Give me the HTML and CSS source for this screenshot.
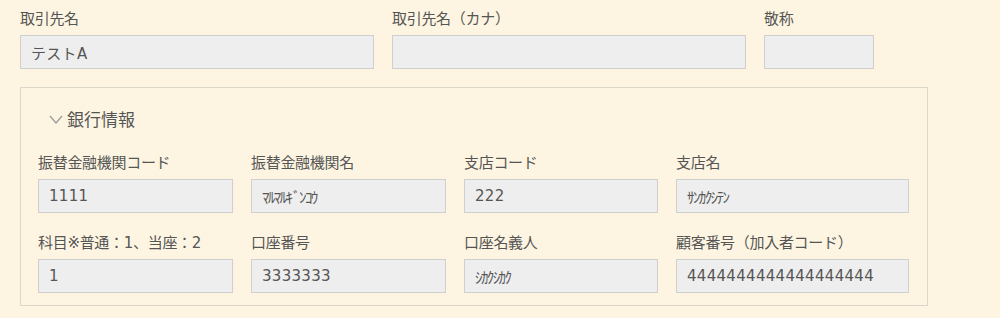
FILE: index.html
```html
<!DOCTYPE html>
<html lang="ja">
<head>
    <meta charset="UTF-8">
    <meta name="viewport" content="width=device-width, initial-scale=1.0">
    <title>取引先情報</title>
    <link rel="stylesheet" href="styles.css">
</head>
<body>
    <div class="page">
        <div class="field-row">
            <div class="field w-name">
                <label class="field-label">取引先名</label>
                <input class="field-input" type="text" value="テストA" readonly>
            </div>
            <div class="field w-name">
                <label class="field-label">取引先名（カナ）</label>
                <input class="field-input" type="text" value="" readonly>
            </div>
            <div class="field w-title">
                <label class="field-label">敬称</label>
                <input class="field-input" type="text" value="" readonly>
            </div>
        </div>

        <fieldset class="bank-box">
            <div class="bank-head">
                <svg class="chevron" width="14" height="9" viewBox="0 0 14 9">
                    <polyline points="1,1 7,8 13,1" fill="none" stroke="#999" stroke-width="1.2"/>
                </svg>
                <span>銀行情報</span>
            </div>
            <div class="bank-grid">
                <div class="field">
                    <label class="field-label">振替金融機関コード</label>
                    <input class="field-input" type="text" value="1111" readonly>
                </div>
                <div class="field">
                    <label class="field-label">振替金融機関名</label>
                    <input class="field-input kana" type="text" value="ﾏﾙﾏﾙｷﾞﾝｺｳ" readonly>
                </div>
                <div class="field">
                    <label class="field-label">支店コード</label>
                    <input class="field-input" type="text" value="222" readonly>
                </div>
                <div class="field">
                    <label class="field-label">支店名</label>
                    <input class="field-input kana" type="text" value="ｻﾝｶｸｼﾃﾝ" readonly>
                </div>
                <div class="field">
                    <label class="field-label">科目※普通：1、当座：2</label>
                    <input class="field-input" type="text" value="1" readonly>
                </div>
                <div class="field">
                    <label class="field-label">口座番号</label>
                    <input class="field-input" type="text" value="3333333" readonly>
                </div>
                <div class="field">
                    <label class="field-label">口座名義人</label>
                    <input class="field-input kana" type="text" value="ｼｶｸｼｶｸ" readonly>
                </div>
                <div class="field">
                    <label class="field-label">顧客番号（加入者コード）</label>
                    <input class="field-input" type="text" value="4444444444444444444" readonly>
                </div>
            </div>
        </fieldset>
    </div>
</body>
</html>
```

FILE: styles.css
```css
body {
    margin: 0;
    padding: 0;
    background-color: #fdf5e2;
    color: #555;
    font-family: "DejaVu Sans", "Noto Sans CJK JP", sans-serif;
    font-size: 15px;
}
.page {
    padding: 9px 20px 0 20px;
}
.field-row {
    display: flex;
    gap: 18px;
}
.field {
    display: flex;
    flex-direction: column;
}
.w-name {
    width: 354px;
}
.w-title {
    width: 110px;
}
.field-label {
    line-height: 20px;
    margin-bottom: 6px;
    white-space: nowrap;
    letter-spacing: -0.3px;
}
.field-input {
    box-sizing: border-box;
    width: 100%;
    height: 34px;
    margin: 0;
    padding: 0 10px;
    border: 1px solid #cfcfcf;
    background-color: #eeeeee;
    color: #555;
    font-family: inherit;
    font-size: 15px;
    letter-spacing: 0.3px;
    outline: none;
}
.field-input.kana {
    letter-spacing: -1.6px;
}
.bank-box {
    box-sizing: border-box;
    width: 908px;
    margin: 18px 0 0 0;
    padding: 18px 18px 12px 17px;
    border: 1px solid #dcd7cb;
    min-width: 0;
}
.bank-head {
    display: flex;
    align-items: center;
    height: 24px;
    padding-left: 11px;
    font-size: 17px;
}
.chevron {
    margin-right: 4px;
    margin-top: 2px;
}
.bank-grid {
    display: grid;
    grid-template-columns: 195px 195px 194px 233px;
    column-gap: 18px;
    row-gap: 20px;
    margin-top: 23px;
}
```
